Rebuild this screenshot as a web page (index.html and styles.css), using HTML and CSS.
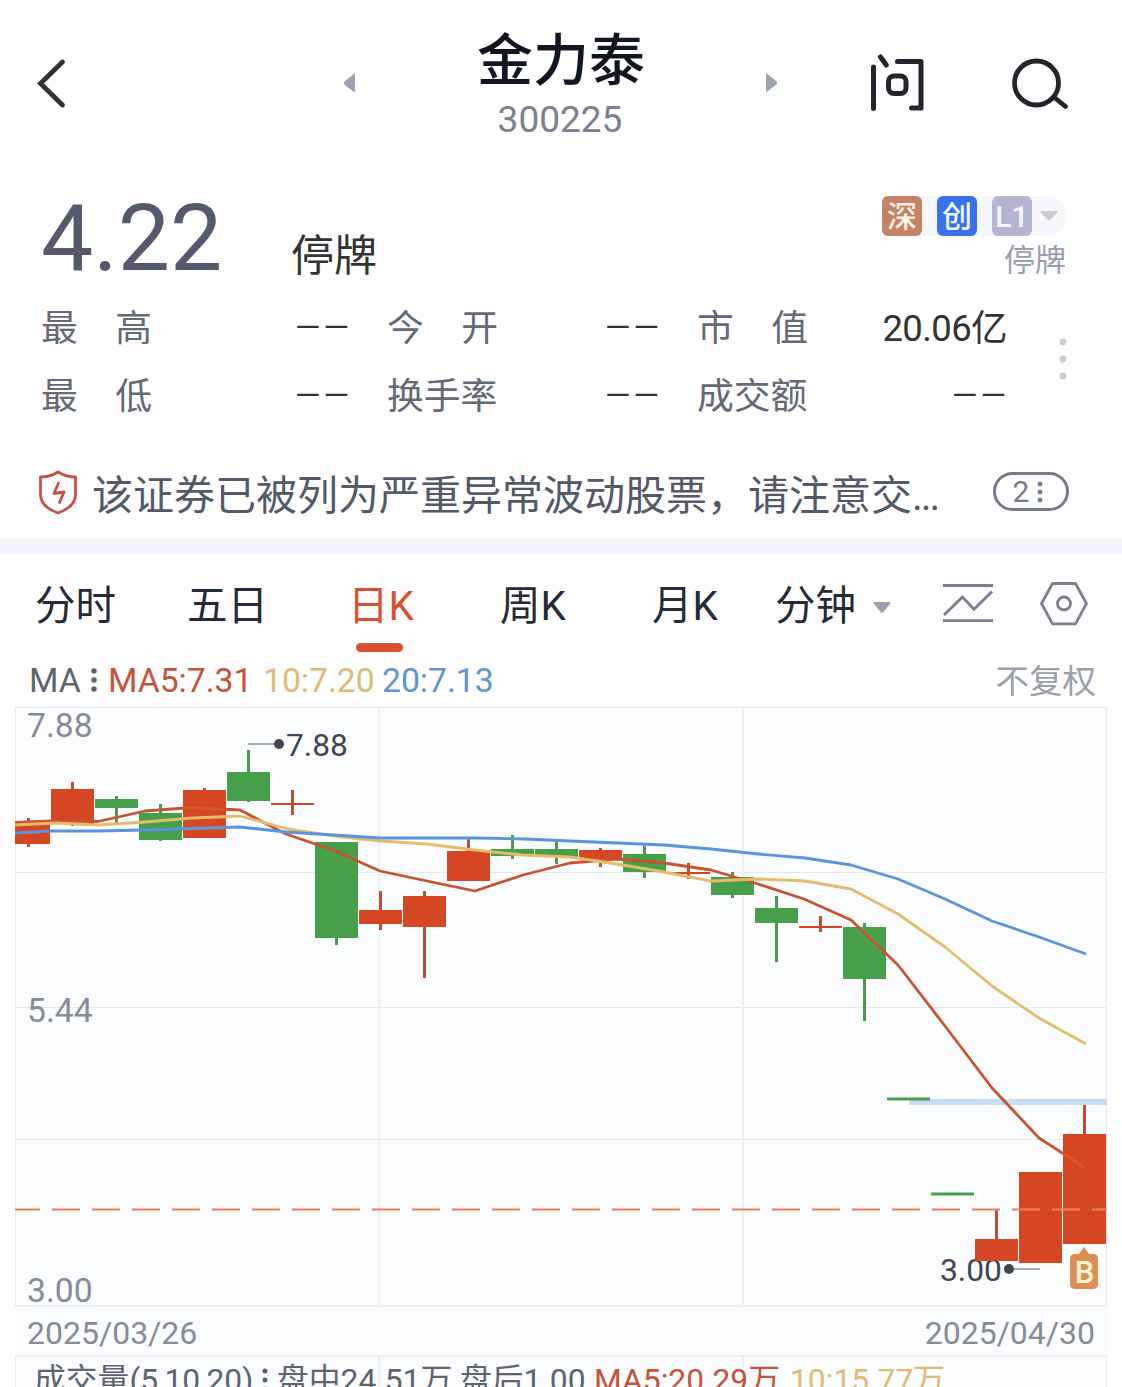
FILE: index.html
```html
<!DOCTYPE html>
<html lang="zh-CN">
<head>
<meta charset="utf-8">
<title>金力泰 300225</title>
<link rel="stylesheet" href="styles.css">
</head>
<body>
<main class="page">
  <header class="header">
    <svg class="back" width="32" height="52" viewBox="36 57 32 52"><path d="M62.500 62 40.500 83.500l22 21.500" fill="none" stroke="#333" stroke-width="4.800" stroke-linecap="round"/></svg>
    <svg class="prev" width="14" height="20" viewBox="343 73 14 20"><path d="M355 73v19.500L344.600 85q-1.400-2 0-3.500z" fill="#9ca3b0"/></svg>
    <div class="title"><h1>金力泰</h1><span>300225</span></div>
    <svg class="next" width="14" height="20" viewBox="765 73 14 20"><path d="M766 73v19.500l10.400-8q1.400-2 0-3.500z" fill="#9ca3b0"/></svg>
    <svg class="ask" width="58" height="60" viewBox="868 52.500 58 60"><g fill="none" stroke="#22252b" stroke-width="5" stroke-linecap="round" stroke-linejoin="round"><path d="M873.500 66.500v41.500M880.500 56.500l5.800 8M897.500 61h23.500v46.500H911.500"/><rect x="888.500" y="75.500" width="17.500" height="17.500" rx="5.500"/></g></svg>
    <svg class="search" width="60" height="60" viewBox="1010 52.500 60 60"><g fill="none" stroke="#22252b" stroke-width="4.800" stroke-linecap="round"><circle cx="1036.500" cy="82.500" r="22"/><path d="M1055 97.500l10.500 8.500"/></g></svg>
  </header>

  <section class="quote">
    <div class="price-row">
      <strong class="price">4.22</strong>
      <span class="state">停牌</span>
      <div class="market">
        <div class="badges">
          <b class="badge sz">深</b><b class="badge cy">创</b><b class="badge lv">L1</b>
          <svg width="18" height="10" viewBox="0 0 18 10"><path d="M1 0h16q1 .5 0 2L10 9q-1 1-2 0L1 2q-1-1.500 0-2z" fill="#c9ced6"/></svg>
        </div>
        <span>停牌</span>
      </div>
    </div>
    <div class="stats">
      <dl>
        <dt><span>最</span><span>高</span></dt><dd class="none">––</dd>
        <dt><span>今</span><span>开</span></dt><dd class="none">––</dd>
        <dt><span>市</span><span>值</span></dt><dd class="cap">20.06亿</dd>
        <dt><span>最</span><span>低</span></dt><dd class="none">––</dd>
        <dt>换手率</dt><dd class="none">––</dd>
        <dt>成交额</dt><dd class="none">––</dd>
      </dl>
      <svg width="8" height="44" viewBox="0 0 8 44"><g fill="#c8ccd4"><circle cx="4" cy="5" r="3.400"/><circle cx="4" cy="22" r="3.400"/><circle cx="4" cy="39" r="3.400"/></g></svg>
    </div>
  </section>

  <section class="notice">
    <svg width="40" height="46" viewBox="38 469 40 46"><g fill="none" stroke="#c9504a" stroke-width="2.800" stroke-linejoin="round" stroke-linecap="round"><path d="M58 472q8 5 17.500 5v18q0 11.500-17.500 18-17.500-6.500-17.500-18V477q9.500 0 17.500-5z"/><path d="M58.500 483l-4.500 10.500 10-1.500-4.500 10.500"/></g></svg>
    <p>该证券已被列为严重异常波动股票，请注意交<i>...</i></p>
    <span class="count">2<svg width="6" height="22" viewBox="0 0 6 22"><g fill="#757b88"><circle cx="3" cy="3" r="2.400"/><circle cx="3" cy="11" r="2.400"/><circle cx="3" cy="19" r="2.400"/></g></svg></span>
  </section>

  <nav class="tabs">
    <span>分时</span><span>五日</span><span class="active">日K</span><span>周K</span><span>月K</span><span>分钟</span>
    <svg class="caret" width="18" height="12" viewBox="0 0 18 12"><path d="M1 0h16q1 .5 0 2l-7 8.500q-1 1-2 0L1 2q-1-1.500 0-2z" fill="#9aa1b0"/></svg>
    <svg class="kind" width="52" height="44" viewBox="942 582 52 44"><g fill="none" stroke="#787e8c" stroke-width="2.800"><path d="M943 585.500h50M943 620.700h50M944 615l18.400-18 11.600 12.300L992 591.500"/></g></svg>
    <svg class="gear" width="50" height="46" viewBox="1039 581 50 46"><g fill="none" stroke="#817f8d" stroke-width="2.800" stroke-linejoin="round"><path d="M1052.500 583.500h23L1086.500 603.500l-11 20.300h-23L1041.500 603.500z"/><circle cx="1064" cy="603.500" r="6.500"/></g></svg>
  </nav>

  <div class="legend">
    <span class="ma">MA</span>
    <svg width="6" height="26" viewBox="0 0 6 26"><g fill="#5d6470"><circle cx="3" cy="4" r="2.700"/><circle cx="3" cy="13" r="2.700"/><circle cx="3" cy="22" r="2.700"/></g></svg>
    <span class="m5">MA5:7.31</span><span class="m10">10:7.20</span><span class="m20">20:7.13</span>
    <span class="adjust">不复权</span>
  </div>

  <section class="chart">
    <svg class="plot" width="1092" height="600" viewBox="15 707 1092 600">
      <g stroke="#e6e8ec" stroke-width="1">
        <path d="M15 707.500h1092M15 872.500h1092M15 1007.500h1092M15 1139.500h1092M15.500 707v600M1106.500 707v600"/>
        <path d="M379 707v600M743 707v600M15 1306h1092" stroke="#eeeff3" stroke-width="2"/>
      </g>
      <g class="axis"><text x="27" y="737">7.88</text><text x="27" y="1022">5.44</text><text x="27" y="1302">3.00</text></g>
      <g class="mark">
        <text x="286" y="756">7.88</text><text x="940" y="1281">3.00</text>
        <path d="M248 744h28M1012 1269h28" stroke="#8e939d" stroke-width="1.600"/>
        <circle cx="279" cy="744" r="5"/><circle cx="1009" cy="1269" r="5"/>
      </g>
      <path d="M909 1099h198v6H909z" fill="#c9dcf5"/>
      <g class="up">
        <path class="wick" d="M28.500 818v29M72.500 782v44M204.500 788v50M292.500 790v25M380.500 891v39M424.500 891v87M468.500 839v15M600.500 848v19M688.500 863v16M820.500 916v16M996.500 1210v30M1084.500 1105v30"/>
        <path d="M15 821h35v23H15zM51 789h43v35H51zM183 790h43v48h-43zM271 803h43v2h-43zM359 910h43v14h-43zM403 896h43v31h-43zM447 851h43v30h-43zM579 850h43v9h-43zM667 872h43v2h-43zM799 926h43v2h-43zM975 1239h43v22h-43zM1019 1172h43v91h-43zM1063 1134h43v110h-43z"/>
      </g>
      <g class="down">
        <path class="wick" d="M116.500 796v27M160.500 804v37M248.500 750v52M336.500 842v103M512.500 835v24M556.500 842v22M644.500 846v32M732.500 872v26M776.500 896v66M864.500 923v98"/>
        <path d="M95 799h43v9H95zM139 813h43v27h-43zM227 772h43v29h-43zM315 842h43v96h-43zM491 849h43v7h-43zM535 849h43v8h-43zM623 854h43v18h-43zM711 877h43v18h-43zM755 908h43v15h-43zM843 927h43v52h-43zM887 1097.500h43v3h-43zM931 1192.500h43v3h-43z"/>
      </g>
      <g class="average">
        <polyline stroke="#c8532f" points="15,822.5 51,821 98,821.500 145,811 192,807.500 240,810 286,834 334,850.500 380,871 427,881 475,891 523,875 570,863 617,859 664,863 711,870 758,884 804,899 851,920 898,965 945,1026 992,1088 1039,1138 1063,1153.500"/>
        <path d="M183 808.200l9-.7 34 1.800M1063 1153.500l22 14.500" stroke="#dd5330"/>
        <polyline stroke="#e6bb6c" points="15,825 55,823 98,825 145,822 192,818 240,816 288,829 334,836 380,841 427,844 475,850 522,855 570,857 617,864 664,872 711,881 758,879 805,881 851,889 898,914 945,947 992,986 1039,1018 1086,1044"/>
        <polyline stroke="#5a94dc" points="15,833 50,831 98,831 145,830 192,828.500 240,827 286,832 334,835 380,838 475,838 525,839 570,841 664,845 711,849 758,854 805,858 851,865 898,879 945,899 992,921 1039,937 1086,954"/>
      </g>
      <path d="M15 1209.500h1092" stroke="#e5845a" stroke-width="1.800" stroke-dasharray="28 12" stroke-dashoffset="3"/>
      <path d="M1084 1247l5 7h4q5 0 5 5v25q0 5-5 5h-18q-5 0-5-5v-25q0-5 5-5h4z" fill="#df8d50"/>
      <path d="M1077 1260h14v22h-14z" fill="#c99a55"/>
      <text class="buy" x="1084.500" y="1283" text-anchor="middle">B</text>
    </svg>
    <div class="dates"><span>2025/03/26</span><span>2025/04/30</span></div>
    <div class="volume">
      <span>成交量(5,10,20)</span>
      <svg width="6" height="26" viewBox="0 0 6 26"><g fill="#5d6470"><circle cx="3" cy="4" r="2.500"/><circle cx="3" cy="13" r="2.500"/><circle cx="3" cy="22" r="2.500"/></g></svg>
      <span class="session">盘中24.51万</span><span class="after">盘后1.00</span><span class="m5">MA5:20.29万</span><span class="m10">10:15.77万</span>
    </div>
  </section>
</main>
</body>
</html>
```
FILE: styles.css
```css
* { box-sizing: border-box; margin: 0; padding: 0; }
body { background: #fefefe; font-family: Roboto, "Noto Sans CJK SC", sans-serif; font-weight: 400; }
svg { display: block; flex: none; }
span, dt, dd, p { white-space: nowrap; }
.page { width: 1122px; height: 1387px; overflow: hidden; }

.header { height: 166px; display: flex; align-items: center; padding-left: 36px; }
.header .prev { margin-left: 275px; }
.title { width: 166px; margin: 0 121px; padding-top: 8px; display: flex; flex-direction: column; align-items: center; }
.title h1 { font-size: 56px; line-height: 66px; font-weight: 500; color: #111722; white-space: nowrap; }
.title span { font-size: 37px; line-height: 52px; margin-right: 2px; color: #7b818e; }
.header .ask { margin-left: 89px; }
.header .search { margin-left: 84px; }

.price-row { height: 128px; display: flex; padding: 18px 56px 0 41px; }
.price { width: 250px; font-size: 93px; line-height: 109px; font-weight: 400; color: #525a6b; }
.state { font-size: 43px; line-height: 60px; margin-top: 42px; color: #333; }
.market { margin-left: auto; padding-top: 12px; display: flex; flex-direction: column; align-items: flex-end; }
.market > span { font-size: 31px; line-height: 44px; margin-top: 3px; color: #9aa0ab; }
.badges { display: flex; align-items: center; gap: 15px; width: 184px; height: 40px; border-radius: 6px 20px 20px 6px; background: #f6f7fa; }
.badge { width: 40px; height: 40px; border-radius: 6px; font-size: 30px; line-height: 41px; font-weight: 500; text-align: center; color: #fff3e4; }
.badge.sz { background: #c58264; }
.badge.cy { background: #3a70ee; color: #eff8ff; }
.badge.lv { background: #b1b5d2; color: #f4f6ff; }
.badges svg { margin-left: -7px; }

.stats { height: 155px; display: flex; padding: 1px 0 0 41px; }
.stats dl { width: 965px; display: grid; grid-template-columns: 111px 197px 149px 161px 149px 198px; grid-auto-rows: 68px; font-size: 36.800px; line-height: 68px; }
.stats dt { width: 111px; display: flex; justify-content: space-between; justify-self: end; color: #636975; }
.stats dd { text-align: right; color: #333; }
.stats .none { font-size: 44px; line-height: 66px; font-weight: 300; margin-right: -2px; }
.stats .cap { font-size: 36.500px; line-height: 67px; letter-spacing: -.6px; margin-right: -1px; }
.stats > svg { margin: 42px 0 0 53px; }

.notice { height: 106px; border-bottom: 16px solid #f4f5fa; display: flex; align-items: flex-start; padding: 20px 53px 0 38px; }
.notice p { margin-left: 14px; font-size: 41px; line-height: 54px; color: #535968; }
.notice i { font-style: normal; letter-spacing: -2px; }
.count { display: flex; align-items: center; justify-content: center; gap: 8px; width: 76px; height: 39px; padding-right: 6px; margin: 3px 0 0 auto; border: 3px solid #757b88; border-radius: 20px; font-size: 30px; line-height: 36px; color: #757b88; }

.tabs { height: 98px; display: flex; align-items: flex-start; padding: 26px 0 0 35px; font-size: 40.500px; line-height: 50px; color: #252a36; }
.tabs > span { width: 152px; }
.tabs > span:nth-child(3) { width: 152px; margin-left: 9px; }
.tabs > span:nth-child(5) { width: 123px; }
.tabs > span:nth-child(6) { width: 81px; }
.tabs .active { color: #d6512f; }
.tabs .active::after { content: ""; display: block; width: 47px; height: 9px; margin: 12px 0 0 8px; border-radius: 5px; background: #d65231; }
.caret { margin: 21px 0 0 17px; }
.kind { margin: 1px 0 0 51px; }
.gear { margin-left: 45px; }

.legend { height: 54px; display: flex; align-items: center; padding: 0 26px 0 29px; font-size: 33.700px; color: #5d6470; }
.legend .ma { width: 62px; }
.legend .m5 { width: 155px; margin-left: 11px; }
.legend .m10 { width: 119px; }
.m5 { color: #c5533a; }
.m10 { color: #e0b975; }
.m20 { color: #5f94d8; }
.adjust { margin-left: auto; padding-bottom: 4px; font-size: 33.500px; color: #9a9fac; }

.chart { width: 1092px; margin-left: 15px; background: #fbfcfe; }
.plot { overflow: visible; }
.axis { font-size: 33.700px; fill: #868b98; }
.mark { font-size: 31.800px; fill: #3f4552; }
.up { fill: #d54723; }
.down { fill: #489f4a; }
.wick { stroke-width: 3; }
.up .wick { stroke: #c04e30; }
.down .wick { stroke: #4a9b50; }
.average { fill: none; stroke-width: 2.800; stroke-linejoin: round; }
.buy { font-size: 31px; font-weight: 500; fill: #fff0cf; }
.dates { height: 50px; display: flex; justify-content: space-between; padding: 0 12px; border-bottom: 2px solid #eeeff3; font-size: 32px; line-height: 53px; color: #868b98; }
.volume { height: 46px; display: flex; align-items: center; padding-left: 18px; font-size: 31.800px; line-height: 46px; color: #5d6470; border: 1px solid #e9eaee; border-width: 0 1px; background: linear-gradient(90deg, transparent 362px, #eeeff3 362px, #eeeff3 364px, transparent 364px, transparent 726px, #eeeff3 726px, #eeeff3 728px, transparent 728px); }
.volume > span:first-child { width: 228px; }
.volume .session { width: 183px; margin-left: 9px; }
.volume .after { width: 134px; }
.volume .m5 { width: 196px; }
```
